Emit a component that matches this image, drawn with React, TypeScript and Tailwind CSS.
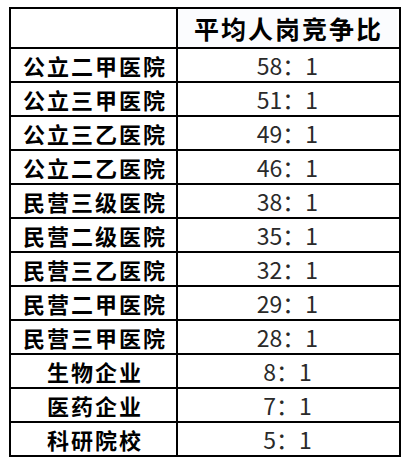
const rows: [string, string][] = [
  ['公立二甲医院', '58：1'],
  ['公立三甲医院', '51：1'],
  ['公立三乙医院', '49：1'],
  ['公立二乙医院', '46：1'],
  ['民营三级医院', '38：1'],
  ['民营二级医院', '35：1'],
  ['民营三乙医院', '32：1'],
  ['民营二甲医院', '29：1'],
  ['民营三甲医院', '28：1'],
  ['生物企业', '8：1'],
  ['医药企业', '7：1'],
  ['科研院校', '5：1'],
]

export default function App() {
  return (
    <div
      className="w-[412px] h-[463px] bg-white pl-[9px] pt-[7px]"
      style={{ fontFamily: '"Noto Sans CJK SC", "Noto Sans", sans-serif' }}
    >
      <div className="w-[392px] border-2 border-black">
        {/* header */}
        <div className="flex h-[38px]">
          <div className="w-[165px]" />
          <div className="w-[221px] border-l-2 border-black flex items-center justify-center bg-[#fbfcfe]">
            <span className="text-[25px] font-bold tracking-[2px] text-black leading-none pl-[2px]">
              平均人岗竞争比
            </span>
          </div>
        </div>

        {rows.map(([name, ratio]) => (
          <div key={name} className="flex h-[34px] border-t-2 border-black">
            <div className="w-[165px] flex items-center justify-center">
              <span className="text-[22px] font-bold tracking-[2px] text-black leading-none pl-[3px]">
                {name}
              </span>
            </div>
            <div className="w-[221px] border-l-2 border-black flex items-center justify-center">
              <span className="text-[23px] font-normal text-[#2a2a2a] leading-none">
                {ratio}
              </span>
            </div>
          </div>
        ))}
      </div>
    </div>
  )
}
